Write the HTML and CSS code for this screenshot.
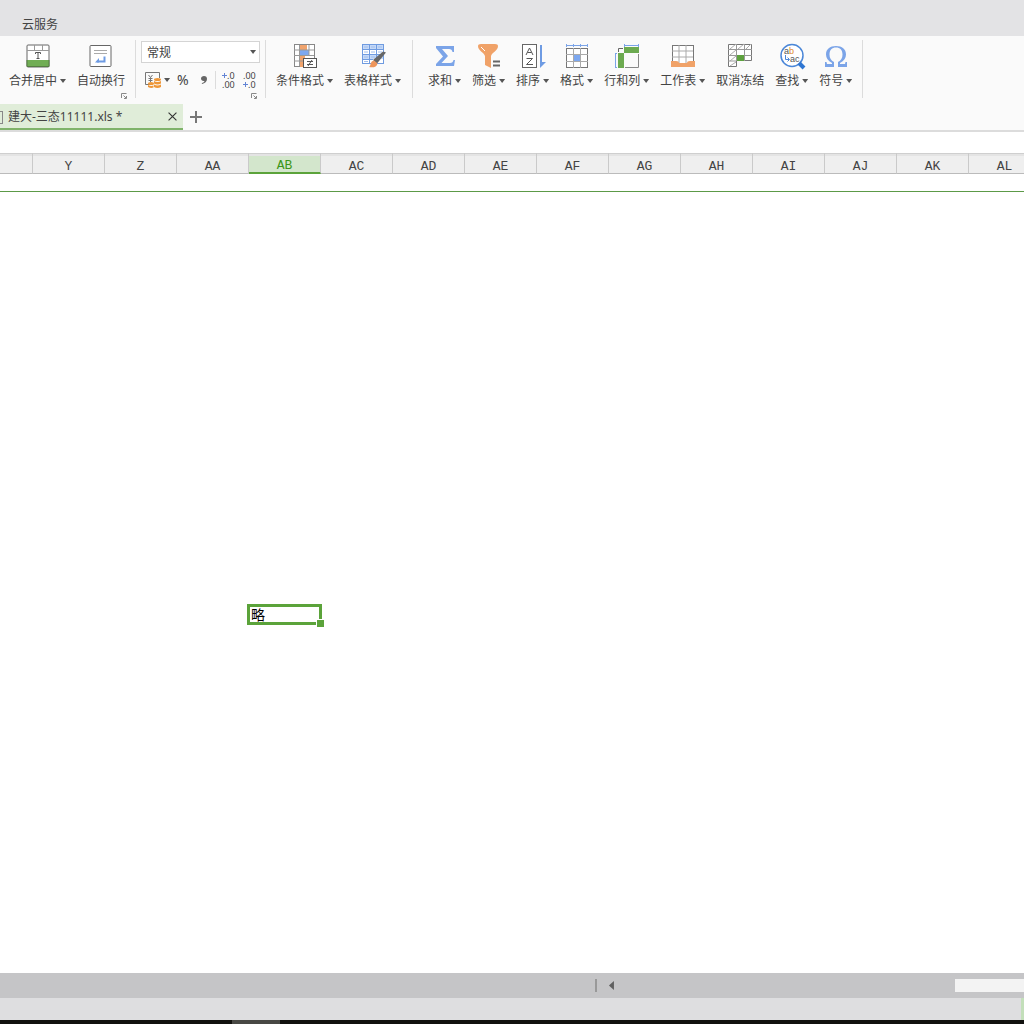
FILE: index.html
```html
<!DOCTYPE html>
<html lang="zh-CN">
<head>
<meta charset="utf-8">
<meta name="viewport" content="width=device-width, initial-scale=1">
<title>建大-三态11111.xls</title>
<link rel="stylesheet" href="styles.css">
</head>
<body>
<nav class="menubar"><a class="menu-link" href="#cloud">云服务</a></nav>

<header class="ribbon">
  <section class="group">
    <button class="tool" type="button">
      <svg class="icon" viewBox="0 0 24 24"><rect x="1" y="1" width="22" height="22" rx="1" fill="#fff" stroke="#666"/><path d="M1 6.500H23M8.500 1V6.500M16.500 1V6.500" fill="none" stroke="#999"/><rect x="1" y="16" width="22" height="7" fill="#70ad54"/><path d="M1 16V22.500H23V16" fill="none" stroke="#557d42"/><path d="M9.500 10V8.500H14.500V10M12 8.500V14.500M10.500 14.500H13.500" fill="none" stroke="#555"/></svg>
      <span class="label">合并居中<i class="caret"></i></span>
    </button>
    <button class="tool" type="button">
      <svg class="icon" viewBox="0 0 24 24"><rect x="1" y="1.500" width="21" height="21" rx="1" fill="#fff" stroke="#666"/><path d="M5 6.500H18M5 9.500H18" stroke="#aaa"/><path d="M15.500 12.500V17.500H8" fill="none" stroke="#6e9be3" stroke-width="2"/><path d="M6 18.500L10 14V18.500Z" fill="#6e9be3"/></svg>
      <span class="label">自动换行</span>
    </button>
    <button class="launcher" type="button" aria-label="对齐设置"><svg viewBox="0 0 6 6"><path d="M.5 5V.5H5.500M3 5.500H5.500V3M2.500 2.500L5 5" fill="none" stroke="#888"/></svg></button>
  </section>

  <section class="group number">
    <div class="select-wrap">
      <select class="format" aria-label="数字格式"><option>常规</option></select><i class="caret"></i>
    </div>
    <div class="small-tools">
      <button class="small money" type="button" aria-label="货币格式">
        <svg class="small-icon" viewBox="0 0 16 16"><path d="M14.500 6V.5H.5V12.500H5" fill="none" stroke="#777"/><path d="M3.500 3L5.500 5.500L7.500 3M5.500 5.500V10M3.500 6.500H7.500M3.500 8.500H7.500" fill="none" stroke="#777"/><g fill="#ee9738"><ellipse cx="12.500" cy="7.500" rx="3.500" ry="1.500"/><path d="M9 9Q12.500 11 16 9V11.500Q12.500 13.500 9 11.500ZM9 12.500Q12.500 14.500 16 12.500V15Q12.500 17 9 15Z"/><ellipse cx="6" cy="11.500" rx="3" ry="1.500"/><path d="M3 13Q6 14.500 8.500 13.500V15.500Q6 16.500 3 15Z"/></g></svg><i class="caret"></i>
      </button>
      <button class="small percent" type="button">%</button>
      <button class="small comma" type="button" aria-label="千位分隔"><svg viewBox="0 0 6 8"><path d="M3 0C5 0 6 1.200 6 3C6 5.500 4 7.500 1 8L.8 7C2.500 6.500 3.300 5.800 3.400 4.900C1.500 5.300 0 4.200 0 2.600C0 1 1.300 0 3 0Z" fill="#666"/></svg></button>
      <span class="divider"></span>
      <button class="small" type="button" aria-label="增加小数位数"><svg class="decimals" viewBox="0 0 13 18"><path d="M0 4.500H5M2.500 2V7" stroke="#6384d4"/><text x="5" y="8">.0</text><text x="0" y="17">.00</text></svg></button>
      <button class="small" type="button" aria-label="减少小数位数"><svg class="decimals" viewBox="0 0 13 18"><text x="0" y="8">.00</text><path d="M0 13.500H5M2.500 11V16" stroke="#6384d4"/><text x="5" y="17">.0</text></svg></button>
    </div>
    <button class="launcher" type="button" aria-label="数字设置"><svg viewBox="0 0 6 6"><path d="M.5 5V.5H5.500M3 5.500H5.500V3M2.500 2.500L5 5" fill="none" stroke="#888"/></svg></button>
  </section>

  <section class="group styles">
    <button class="tool" type="button">
      <svg class="icon" viewBox="0 0 24 24"><rect x="1.500" y=".5" width="20" height="22" fill="#fff" stroke="#888"/><rect x="7" y="1" width="7" height="5" fill="#f0a36c"/><rect x="7" y="6" width="9" height="5" fill="#7da8f0"/><rect x="7" y="11" width="5" height="12" fill="#f0a36c"/><path d="M1 6H21M1 11.500H21M1 17H10M6.500 1V22M16 1V12" fill="none" stroke="#999"/><rect x="10.500" y="14.500" width="13" height="9" fill="#fff" stroke="#555"/><path d="M14 17.500H20M14 20.500H20M19 16L15 22" stroke="#555"/></svg>
      <span class="label">条件格式<i class="caret"></i></span>
    </button>
    <button class="tool" type="button">
      <svg class="icon" viewBox="0 0 24 24"><rect x="1.500" y=".5" width="21" height="19" fill="#fff" stroke="#6f9be0"/><rect x="2" y="1" width="20" height="4" fill="#c5d9f7"/><rect x="2" y="10" width="20" height="5" fill="#c5d9f7"/><path d="M1 5.500H22M1 10.500H22M1 15.500H12M8.500 1V20M15.500 1V16" stroke="#6f9be0"/><path d="M3 3H7M10 3H14M17 3H21M3 8H7M10 8H14M17 8H21M3 13H7M10 13H14M3 17.500H7" stroke="#a0bdec"/><path d="M12 16L22 7.500L25 8.500L16 19.500Z" fill="#666"/><path d="M8 23C10 22 9 17 13 16.500L16.500 19.500C16 23 12 24 8 23Z" fill="#ed955b"/></svg>
      <span class="label">表格样式<i class="caret"></i></span>
    </button>
  </section>

  <section class="group editing">
    <button class="tool" type="button">
      <svg class="icon" viewBox="0 0 24 24"><path d="M3 2H21V8H19.500Q19 5 16 5H9L15 12L8.500 19H17Q20 19 20.500 16H22L21 22H3V20L10 12.500L3 4Z" fill="#7ba4e8"/></svg>
      <span class="label">求和<i class="caret"></i></span>
    </button>
    <button class="tool" type="button">
      <svg class="icon" viewBox="0 0 24 24"><path d="M1 2Q1 0 4 0H18Q21 0 21 2C21 7 15 8 14 12V24L8 21V12C7 8 1 7 1 2Z" fill="#f0a268"/><path d="M4 3Q6 5 8 7" fill="none" stroke="#fff"/><path d="M16 17.500H23M16 21.500H23" stroke="#666" stroke-width="2"/></svg>
      <span class="label">筛选<i class="caret"></i></span>
    </button>
    <button class="tool" type="button">
      <svg class="icon" viewBox="0 0 24 24"><rect x="1.500" y=".5" width="14" height="23" fill="#fff" stroke="#666"/><path d="M5 11L8.500 4L12 11M6.500 8.500H10.500M5.500 14.500H11.500L5.500 20.500H12" fill="none" stroke="#555"/><path d="M20 1V22" stroke="#6e9be3" stroke-width="2"/><path d="M19 24V18H25Z" fill="#6e9be3"/></svg>
      <span class="label">排序<i class="caret"></i></span>
    </button>
    <button class="tool" type="button">
      <svg class="icon" viewBox="0 0 24 24"><path d="M1 1.500H23M1.500 0V3M8.500 0V3M15.500 0V3M22.500 0V3" stroke="#7ba4e8"/><rect x="1.500" y="4.500" width="21" height="19" fill="#fff" stroke="#777"/><rect x="9" y="11" width="7" height="6" fill="#7da8f0"/><path d="M1 10.500H23M1 17.500H23M8.500 4V24M15.500 4V24" fill="none" stroke="#aaa"/></svg>
      <span class="label">格式<i class="caret"></i></span>
    </button>
    <button class="tool" type="button">
      <svg class="icon" viewBox="0 0 24 24"><path d="M9 1.500H24M9.500 0V3M23.500 0V3M.5 9V24M0 9.500H2M0 23.500H2" stroke="#7ba4e8"/><path d="M3.500 8V4.500H8" fill="none" stroke="#666"/><path d="M9 3H24V9H9ZM3 9H9V24H3Z" fill="#6caa50"/><path d="M10 23.500H23.500V10" fill="none" stroke="#888"/></svg>
      <span class="label">行和列<i class="caret"></i></span>
    </button>
    <button class="tool" type="button">
      <svg class="icon" viewBox="0 0 24 24"><rect x="1.500" y="1.500" width="21" height="20" fill="#fff" stroke="#777"/><path d="M1 7H22M1 13H22M8 1V19M15 1V19" stroke="#aaa"/><path d="M0 17H5Q8 17 8 19H16Q16 17 19 17H24V23H0Z" fill="#f0a268"/></svg>
      <span class="label">工作表<i class="caret"></i></span>
    </button>
    <button class="tool" type="button">
      <svg class="icon" viewBox="0 0 24 24"><path d="M.5 .5H23.500V16.500H8.500V22.500H.5Z" fill="#fff" stroke="#777"/><path d="M0 5.500H24M0 11.500H24M0 17H8M8.500 0V17M16.500 0V17" stroke="#999"/><path d="M2 5L8 0M10 5L16 0M18 5L23 0M2 11L8 6M2 17L8 12M2 22L8 18" stroke="#aaa"/><rect x="9" y="11" width="7" height="6" fill="#5da13e"/></svg>
      <span class="label">取消冻结</span>
    </button>
    <button class="tool" type="button">
      <svg class="icon" viewBox="0 0 24 24"><circle cx="12" cy="11.500" r="11" fill="#fff" stroke="#4b87d8" stroke-width="1.500"/><path d="M19 19L24 24" stroke="#2f76d2" stroke-width="4"/><text class="find-a" x="4" y="10">a</text><text class="find-b" x="9" y="10">b</text><text class="find-a" x="10" y="18">ac</text><path d="M5.500 11V15.500H9M7.500 13.500L9.500 15.500L7.500 17.500" fill="none" stroke="#4b87d8"/></svg>
      <span class="label">查找<i class="caret"></i></span>
    </button>
    <button class="tool" type="button">
      <svg class="icon" viewBox="0 0 24 24"><path d="M1 18H2.500L3 20H8V19C4 17 2 14 2 10.500C2 5 6 2 12 2S22 5 22 10.500C22 14 20 17 16 19V20H21L21.500 18H23V23H14V18C17 16.500 18.500 14 18.500 10.500C18.500 6 16 3.500 12 3.500S5.500 6 5.500 10.500C5.500 14 7 16.500 10 18V23H1Z" fill="#7ba4e8"/></svg>
      <span class="label">符号<i class="caret"></i></span>
    </button>
  </section>
</header>

<nav class="tabs">
  <div class="tab">
    <a class="tab-name" href="#book">建大-三态11111.xls *</a>
    <button class="tab-button" type="button" aria-label="关闭"><svg class="close" viewBox="0 0 8 8"><path d="M.5 .5L7.500 7.500M7.500 .5L.5 7.500" stroke="#333"/></svg></button>
  </div>
  <button class="tab-button add" type="button" aria-label="新建"><svg class="plus" viewBox="0 0 12 12"><path d="M6 0V12M0 6H12" stroke="#777" stroke-width="2"/></svg></button>
</nav>

<input class="formula" type="text" aria-label="编辑栏">

<main class="sheet">
  <table class="grid">
    <colgroup><col class="cut"><col span="14" class="full"></colgroup>
    <thead>
      <tr><th></th><th>Y</th><th>Z</th><th>AA</th><th class="active">AB</th><th>AC</th><th>AD</th><th>AE</th><th>AF</th><th>AG</th><th>AH</th><th>AI</th><th>AJ</th><th>AK</th><th>AL</th></tr>
    </thead>
    <tbody>
      <tr class="frozen"><td colspan="15"></td></tr>
      <tr class="blank"><td colspan="15"></td></tr>
      <tr class="row"><td colspan="4"></td><td class="selected">略</td><td colspan="10"></td></tr>
    </tbody>
  </table>
</main>

<div class="scroll-row">
  <div class="hscroll">
    <span class="splitter"></span>
    <button class="scroll-left" type="button" aria-label="向左滚动"></button>
    <span class="thumb"></span>
  </div>
</div>
<footer class="status"><span class="view"></span></footer>
<div class="taskbar"><span class="task"></span></div>
</body>
</html>
```
FILE: styles.css
```css
* { box-sizing: border-box; }
html, body { height: 100%; }
body {
  margin: 0;
  display: flex;
  flex-direction: column;
  overflow: hidden;
  background: #fff;
  color: #444;
  font: 12px/16px "Noto Sans", "Noto Sans CJK SC", sans-serif;
}
button, select, input { font: inherit; color: inherit; border: 0; padding: 0; margin: 0; background: none; border-radius: 0; }
a { color: inherit; text-decoration: none; }
svg { display: block; overflow: visible; }

.menubar { flex: none; height: 36px; padding: 17px 22px 0; background: #e3e3e5; }
.menu-link { display: block; }

.ribbon { flex: none; display: flex; height: 68px; padding: 4px 0 6px; background: #fafafa; }
.group { position: relative; display: flex; flex: none; gap: 11px; align-items: flex-start; padding: 4px 10px 0 9px; border-right: 1px solid #dcdcdc; }
.group.styles { padding: 4px 11px 0 10px; }
.group.editing { padding-left: 15px; }
.tool { display: flex; flex-direction: column; align-items: center; gap: 5px; }
.icon { width: 24px; height: 24px; }
.label { display: flex; align-items: center; gap: 3px; white-space: nowrap; }
.caret { flex: none; width: 6px; height: 4px; background: #555; clip-path: polygon(0 0, 100% 0, 50% 100%); }
.find-a, .find-b { font: 9px "Liberation Sans", sans-serif; fill: #555; }
.find-b { fill: #e08a2e; }
.launcher { position: absolute; right: 8px; bottom: -1px; width: 6px; height: 6px; }

.group.number { flex-direction: column; gap: 8px; padding: 1px 5px 0; }
.select-wrap { display: flex; align-items: center; width: 119px; height: 22px; padding-right: 3px; border: 1px solid #d4d4d4; background: #fff; }
.format { flex: 1; height: 20px; padding: 2px 0 0 5px; appearance: none; outline: 0; }
.small-tools { display: flex; align-items: center; height: 18px; padding-left: 4px; }
.small { display: flex; align-items: center; }
.money { gap: 3px; }
.small-icon { width: 16px; height: 16px; }
.percent { margin-left: 7px; font-size: 14px; }
.comma { width: 6px; margin-left: 12px; }
.comma svg { width: 6px; height: 8px; }
.divider { width: 1px; height: 18px; margin: 0 6px 0 8px; background: #dcdcdc; }
.decimals { width: 13px; height: 18px; margin-right: 8px; font: 9px "Noto Sans", sans-serif; fill: #444; }
.small:last-child .decimals { margin-right: 0; }

.tabs { flex: none; display: flex; height: 28px; background: #fafafa; border-bottom: 2px solid #dcdcdc; }
.tab { display: flex; align-items: center; justify-content: space-between; width: 183px; height: 26px; padding-right: 6px; background: #e0edd9; border-bottom: 2px solid #7fb36a; }
.tab-name { display: flex; align-items: center; gap: 5px; padding-top: 2px; }
.tab-name::before { content: ""; width: 2px; height: 11px; border: 1px solid #888; border-left: 0; }
.tab-button { display: flex; align-items: center; }
.close { width: 9px; height: 9px; }
.plus { width: 12px; height: 12px; }
.add { margin-left: 7px; }

.formula { flex: none; width: 100%; height: 21px; padding: 0 8px; outline: 0; background: #fff; }

.sheet { flex: 1; min-height: 0; overflow: hidden; }
.grid { width: 1041px; table-layout: fixed; border-collapse: separate; border-spacing: 0; }
.cut { width: 33px; }
.full { width: 72px; }
.grid th, .grid td { padding: 0; }
.grid th {
  height: 21px;
  padding-top: 7px;
  background: linear-gradient(#cfcfcf 1px, #e4e4e4 1px, #e4e4e4 3px, #efefef 3px);
  border-right: 1px solid #cacaca;
  border-bottom: 1px solid #bbb;
  font: 13px/13px "Liberation Mono", monospace;
}
.grid th.active { padding-top: 6px; color: #3c9618; background: linear-gradient(#cfcfcf 1px, #e4e4e4 1px, #e4e4e4 3px, #d3e6cc 3px); border-bottom: 2px solid #5ba33a; }
.frozen td { height: 18px; border-bottom: 1px solid #5c9a48; }
.blank td { height: 412px; }
.row td { height: 21px; }
.grid td.selected { position: relative; padding-left: 2px; color: #000; font-size: 14px; line-height: 20px; }
.selected::before { content: ""; position: absolute; inset: 0 -1px 0 -2px; border: 3px solid #5ba33a; }
.selected::after { content: ""; position: absolute; right: -4px; bottom: -3px; width: 7px; height: 7px; background: #5ba33a; border: 1px solid #fff; }

.scroll-row { flex: none; display: flex; justify-content: flex-end; height: 25px; background: #c5c5c7; }
.hscroll { display: flex; align-items: center; width: 42%; }
.splitter { width: 2px; height: 13px; margin: 0 12px 0 1px; background: #999; }
.scroll-left { width: 5px; height: 9px; background: #606060; clip-path: polygon(100% 0, 100% 100%, 0 50%); }
.thumb { width: 16%; height: 13px; margin-left: auto; background: #f3f3f3; }
.status { flex: none; display: flex; justify-content: flex-end; height: 22px; background: #dedee0; }
.view { width: 3px; background: #c3dfba; }
.taskbar { flex: none; height: 4px; padding-left: 232px; background: #11110e; }
.task { display: block; width: 48px; height: 4px; background: #484844; }
```
